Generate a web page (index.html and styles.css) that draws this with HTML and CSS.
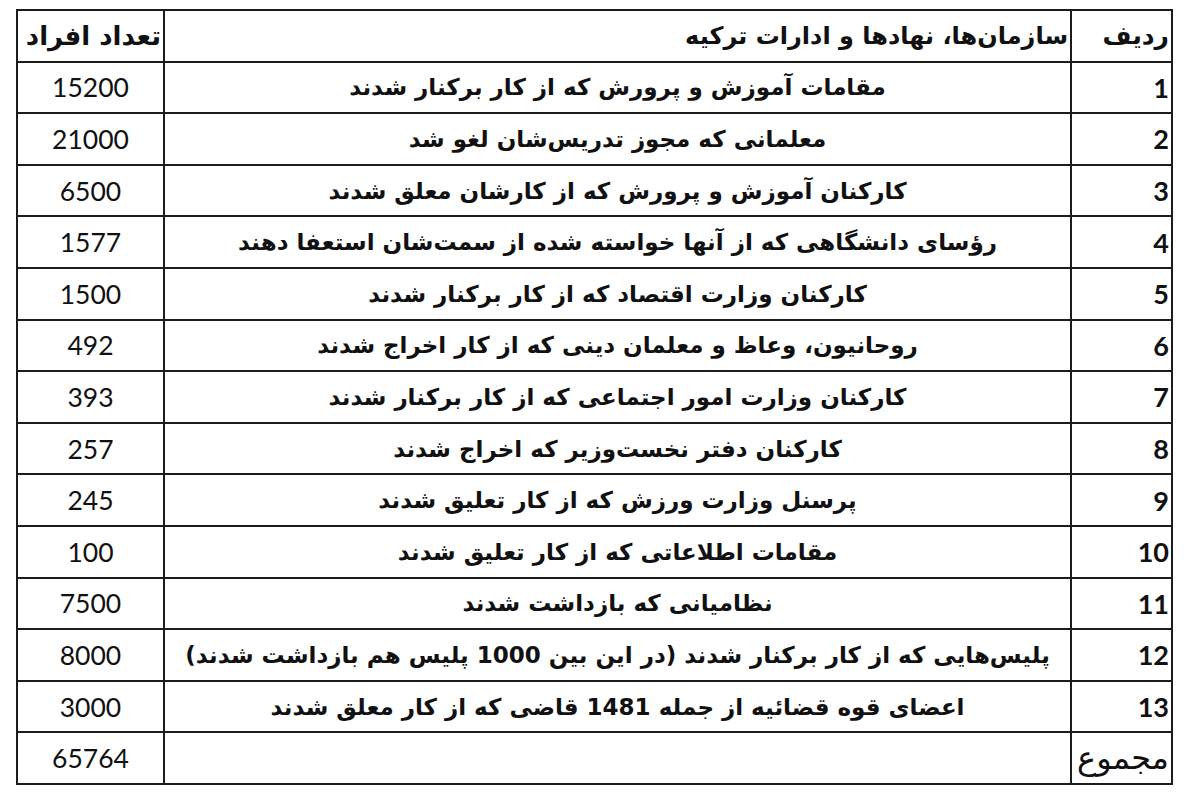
FILE: index.html
```html
<!DOCTYPE html>
<html lang="fa" dir="rtl">
<head>
<meta charset="utf-8">
<link rel="stylesheet" href="styles.css">
</head>
<body>
<div class="wrap">
<table class="tbl">
<thead>
<tr>
<th class="c-no">ردیف</th>
<th class="c-desc">سازمان‌ها، نهادها و ادارات ترکیه</th>
<th class="c-count">تعداد افراد</th>
</tr>
</thead>
<tbody>
<tr><td class="c-no">1</td><td class="c-desc">مقامات آموزش و پرورش که از کار برکنار شدند</td><td class="c-count">15200</td></tr>
<tr><td class="c-no">2</td><td class="c-desc">معلمانی که مجوز تدریس‌شان لغو شد</td><td class="c-count">21000</td></tr>
<tr><td class="c-no">3</td><td class="c-desc">کارکنان آموزش و پرورش که از کارشان معلق شدند</td><td class="c-count">6500</td></tr>
<tr><td class="c-no">4</td><td class="c-desc">رؤسای دانشگاهی که از آنها خواسته شده از سمت‌شان استعفا دهند</td><td class="c-count">1577</td></tr>
<tr><td class="c-no">5</td><td class="c-desc">کارکنان وزارت اقتصاد که از کار برکنار شدند</td><td class="c-count">1500</td></tr>
<tr><td class="c-no">6</td><td class="c-desc">روحانیون، وعاظ و معلمان دینی که از کار اخراج شدند</td><td class="c-count">492</td></tr>
<tr><td class="c-no">7</td><td class="c-desc">کارکنان وزارت امور اجتماعی که از کار برکنار شدند</td><td class="c-count">393</td></tr>
<tr><td class="c-no">8</td><td class="c-desc">کارکنان دفتر نخست‌وزیر که اخراج شدند</td><td class="c-count">257</td></tr>
<tr><td class="c-no">9</td><td class="c-desc">پرسنل وزارت ورزش که از کار تعلیق شدند</td><td class="c-count">245</td></tr>
<tr><td class="c-no">10</td><td class="c-desc">مقامات اطلاعاتی که از کار تعلیق شدند</td><td class="c-count">100</td></tr>
<tr><td class="c-no">11</td><td class="c-desc">نظامیانی که بازداشت شدند</td><td class="c-count">7500</td></tr>
<tr><td class="c-no">12</td><td class="c-desc">پلیس‌هایی که از کار برکنار شدند (در این بین 1000 پلیس هم بازداشت شدند)</td><td class="c-count">8000</td></tr>
<tr><td class="c-no">13</td><td class="c-desc">اعضای قوه قضائیه از جمله 1481 قاضی که از کار معلق شدند</td><td class="c-count">3000</td></tr>
<tr class="total"><td class="c-no">مجموع</td><td class="c-desc"></td><td class="c-count">65764</td></tr>
</tbody>
</table>
</div>
</body>
</html>
```
FILE: styles.css
```css
html, body {
  margin: 0;
  padding: 0;
  background: #ffffff;
  overflow: hidden;
}
.wrap {
  padding: 9px 27px 0 16px;
  direction: rtl;
}
.tbl {
  width: 1157px;
  border-collapse: collapse;
  table-layout: fixed;
  direction: rtl;
  color: #111;
  font-family: "DejaVu Sans", sans-serif;
}
.tbl th, .tbl td {
  border: 2px solid #1c1c1c;
  height: 49.6px;
  padding: 0 2px;
  white-space: nowrap;
  overflow: hidden;
}
.tbl th {
  font-weight: bold;
  font-size: 24px;
  text-align: right;
}
.tbl th.c-no { font-size: 25px; }
.tbl th.c-count { font-size: 26px; }
.c-no { width: 95px; }
.c-count { width: 141px; }
td.c-no {
  text-align: right;
  font-family: "Lato", "DejaVu Sans", sans-serif;
  font-weight: bold;
  font-size: 27px;
}
td.c-desc {
  text-align: center;
  font-weight: bold;
  font-size: 23px;
}
td.c-count {
  text-align: center;
  font-family: "Lato", sans-serif;
  font-size: 26.5px;
}
.total td.c-no {
  font-family: "DejaVu Sans", sans-serif;
  font-weight: normal;
  font-size: 32px;
}
```
